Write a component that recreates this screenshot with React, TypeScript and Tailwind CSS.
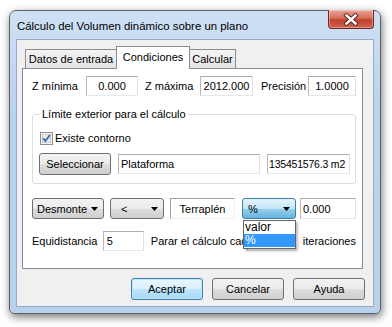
import React from 'react'

const ui = "font-['Liberation_Sans',Arial,sans-serif] text-[11px] leading-[14px] text-black"

const btnBg = 'bg-[linear-gradient(#f2f2f2,#ebebeb_50%,#dddddd_50%,#cfcfcf)]'

const Arrow = () => (
  <svg width="7" height="4" viewBox="0 0 7 4" className="shrink-0">
    <path d="M0 0h7L3.5 4z" fill="#000" />
  </svg>
)

const TextBox: React.FC<{ value?: string; className?: string }> = ({ value, className = '' }) => (
  <div
    className={`h-[20px] shrink-0 flex items-center whitespace-nowrap overflow-hidden bg-white border border-[#abadb3] border-l-[#b5b8c0] border-r-[#dbdfe6] border-b-[#e3e9ef] px-[2px] ${className}`}
  >
    {value}
  </div>
)

const Combo: React.FC<{ label: string; className?: string }> = ({ label, className = '' }) => (
  <div
    className={`h-[21px] shrink-0 flex items-center justify-between rounded-[3px] border border-[#707070] ${btnBg} pl-[4px] pr-[5px] ${className}`}
  >
    <span>{label}</span>
    <Arrow />
  </div>
)

const Button: React.FC<{ label: string; primary?: boolean; className?: string }> = ({ label, primary, className = '' }) => (
  <div
    className={`h-[22px] w-[72px] shrink-0 flex items-center justify-center rounded-[3px] border ${
      primary
        ? 'border-[#3c7fb1] bg-[linear-gradient(#eaf6fd,#d9f0fc_50%,#bee6fd_50%,#a7d9f5)] shadow-[inset_0_0_0_1px_#bfe6f9]'
        : `border-[#707070] ${btnBg}`
    } ${className}`}
  >
    {label}
  </div>
)

export default function App() {
  return (
    <div className={`w-[392px] h-[327px] overflow-hidden bg-white pl-[9px] pt-[10px] ${ui}`}>
      <div className="w-[372px] h-[304px] flex flex-col rounded-t-[7px] rounded-b-[5px] border border-[#59626d] bg-[linear-gradient(#cfe0f3,#bcd3ec_30%,#b9d1ea)] shadow-[1px_3px_9px_rgba(0,0,0,0.55)]">
        {/* title bar */}
        <div className="h-[28px] flex items-start shrink-0">
          <div className="pl-[7px] pt-[7px] text-[11.4px] leading-[16px] text-black">
            Cálculo del Volumen dinámico sobre un plano
          </div>
          <div className="ml-auto mr-[6px] -mt-px w-[46px] h-[19px] flex items-center justify-center rounded-b-[4px] border border-[#6b2a22] border-t-0 bg-[linear-gradient(#e8a597,#d66d5c_45%,#c2412d_55%,#d0634f)] shadow-[inset_0_0_0_1px_rgba(255,255,255,0.35)]">
            <svg width="16" height="13" viewBox="0 0 16 13">
              <path d="M3.5 2.5l9 8M12.5 2.5l-9 8" stroke="#5a2a22" strokeWidth="4.4" strokeLinecap="square" />
              <path d="M3.5 2.5l9 8M12.5 2.5l-9 8" stroke="#fff" strokeWidth="2.4" strokeLinecap="square" />
            </svg>
          </div>
        </div>

        {/* client area */}
        <div className="ml-[6px] mr-[6px] h-[268px] shrink-0 flex flex-col border border-[#98abc4] bg-[#f0f0f0]">
          {/* tabs */}
          <div className="ml-[5px] mt-[6px] w-[341px] flex flex-col">
            <div className="h-[22px] flex items-end pl-[3px] relative z-10">
              <div className="h-[19px] w-[92px] flex items-center justify-center border border-b-0 border-[#898c95] bg-[linear-gradient(#f3f3f3,#e5e5e5)]">
                Datos de entrada
              </div>
              <div className="h-[23px] w-[74px] -ml-px -mb-px flex items-start pt-[3px] justify-center border border-b-0 border-[#898c95] bg-white">
                Condiciones
              </div>
              <div className="h-[19px] w-[47px] -ml-px flex items-center justify-center border border-b-0 border-[#898c95] bg-[linear-gradient(#f3f3f3,#e5e5e5)]">
                Calcular
              </div>
            </div>

            {/* panel */}
            <div className="h-[201px] border border-[#898c95] bg-white pl-[9px] pr-[6px] flex flex-col">
              {/* row 1 */}
              <div className="mt-[7px] h-[20px] flex items-center">
                <div className="w-[54px]">Z mínima</div>
                <TextBox value="0.000" className="w-[52px] justify-center" />
                <div className="ml-[7px] w-[55px]">Z máxima</div>
                <TextBox value="2012.000" className="w-[53px] justify-center" />
                <div className="ml-[8px] w-[47px]">Precisión</div>
                <TextBox value="1.0000" className="w-[48px] justify-center" />
              </div>

              {/* group box */}
              <fieldset className="mt-[11px] w-[324px] border border-[#d5dfe5] rounded-[3px] pl-[6px] pb-[9px]">
                <legend className="px-[2px] ml-[1px] leading-[14px]">Límite exterior para el cálculo</legend>
                <div className="mt-[10px] h-[14px] flex items-center ml-[1px]">
                  <svg width="13" height="13" viewBox="0 0 13 13" className="shrink-0">
                    <rect x="0.5" y="0.5" width="12" height="12" fill="#f4f4f4" stroke="#8e8f8f" />
                    <rect x="2.5" y="2.5" width="8" height="8" fill="#e9eef4" stroke="#c3ccd6" />
                    <path d="M3.2 6.4l2.2 2.6L10 3" fill="none" stroke="#4b6aa6" strokeWidth="2" />
                  </svg>
                  <span className="ml-[2px]">Existe contorno</span>
                </div>
                <div className="mt-[9px] h-[20px] flex items-center">
                  <Button label="Seleccionar" className="w-[70px] h-[20px]" />
                  <TextBox value="Plataforma" className="ml-[7px] w-[142px]" />
                  <TextBox value="135451576.3 m2" className="ml-[7px] w-[83px] px-px text-[10.5px] tracking-[-0.2px]" />
                </div>
              </fieldset>

              {/* row 3 */}
              <div className="mt-[14px] h-[21px] flex items-center">
                <Combo label="Desmonte" className="w-[72px]" />
                <Combo label="<" className="ml-[6px] w-[54px] pl-[10px]" />
                <div className="ml-[6px] w-[65px] h-[21px] flex items-center justify-center border border-[#a0a0a0] border-r-[#f0f0f0] border-b-[#f0f0f0] bg-white">
                  Terraplén
                </div>
                <div className="relative ml-[7px]">
                  <div className="h-[21px] w-[54px] flex items-center justify-between rounded-[3px] border border-[#3c7fb1] bg-[linear-gradient(#e5f4fc,#c4e5f6_50%,#98d1ef_50%,#68b3db)] pl-[5px] pr-[5px]">
                    <span>%</span>
                    <Arrow />
                  </div>
                  <div className="absolute left-[1px] top-[22px] w-[53px] z-20 border border-[#646464] bg-white shadow-[2px_2px_2px_rgba(0,0,0,0.25)] flex flex-col pb-px text-[12px]">
                    <div className="h-[13px] leading-[13px] pl-[1px]">valor</div>
                    <div className="h-[13px] leading-[13px] pl-[1px] bg-[#3399ff] text-white">%</div>
                  </div>
                </div>
                <TextBox value="0.000" className="ml-[4px] w-[56px] h-[21px]" />
              </div>

              {/* row 4 */}
              <div className="mt-[12px] h-[19px] flex items-center">
                <div className="w-[72px]">Equidistancia</div>
                <TextBox value="5" className="w-[41px] h-[19px] pl-[3px]" />
                <div className="ml-[7px] w-[96px] whitespace-nowrap">Parar el cálculo cada</div>
                <TextBox className="w-[48px] h-[19px]" />
                <div className="ml-[8px]">iteraciones</div>
              </div>
            </div>
          </div>

          {/* buttons */}
          <div className="mt-[9px] flex justify-end pr-[8px] gap-[9px]">
            <Button label="Aceptar" primary />
            <Button label="Cancelar" />
            <Button label="Ayuda" />
          </div>
        </div>
      </div>
    </div>
  )
}
